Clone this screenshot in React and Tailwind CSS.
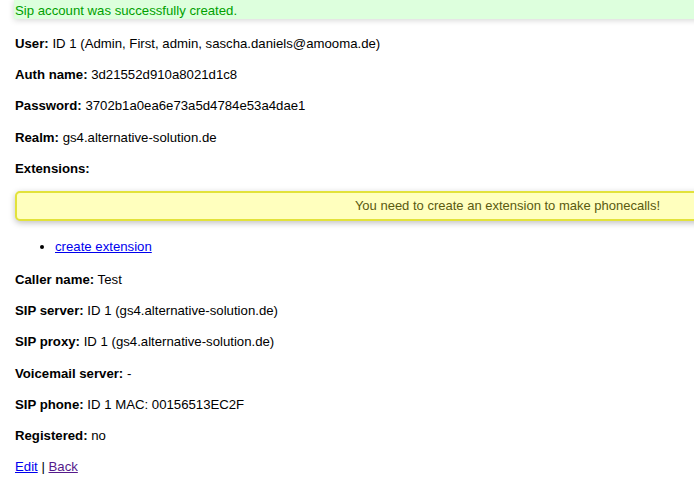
import React from "react";

const rows1 = [
  ["User:", "ID 1 (Admin, First, admin, sascha.daniels@amooma.de)"],
  ["Auth name:", "3d21552d910a8021d1c8"],
  ["Password:", "3702b1a0ea6e73a5d4784e53a4dae1"],
  ["Realm:", "gs4.alternative-solution.de"],
  ["Extensions:", ""],
];

const rows2 = [
  ["Caller name:", "Test"],
  ["SIP server:", "ID 1 (gs4.alternative-solution.de)"],
  ["SIP proxy:", "ID 1 (gs4.alternative-solution.de)"],
  ["Voicemail server:", "-"],
  ["SIP phone:", "ID 1 MAC: 00156513EC2F"],
  ["Registered:", "no"],
];

function Row({ label, value }) {
  return (
    <p className="mb-[13.2px] leading-[18px]">
      <b className="font-bold">{label}</b> {value}
    </p>
  );
}

export default function App() {
  return (
    <div
      className="relative h-[493px] w-[694px] overflow-hidden bg-white px-[15px] text-[13.2px] text-black"
      style={{ fontFamily: '"Liberation Sans", Arial, sans-serif' }}
    >
      {/* flash notice */}
      <div className="-ml-[1px] h-[19px] w-[900px] bg-[#ddffdd] pl-[1px] leading-[21px] text-[#00a000] shadow-[0_1px_6px_rgba(0,0,0,0.18)]">
        Sip account was successfully created.
      </div>

      <div className="mt-[16px]">
        {rows1.map(([l, v]) => (
          <Row key={l} label={l} value={v} />
        ))}
      </div>

      <div className="mt-[1px] h-[30px] w-[985px] rounded-[5px] border-2 border-[#e2e23a] bg-[#ffffbe] text-center text-[13px] leading-[26px] text-[#5a5a10] shadow-[0_2px_6px_rgba(0,0,0,0.25)]">
        You need to create an extension to make phonecalls!
      </div>

      <ul className="mb-[15px] mt-[17px] list-disc pl-[40px] leading-[18px]">
        <li>
          <a href="#" className="text-[#0000ee] underline">
            create extension
          </a>
        </li>
      </ul>

      {rows2.map(([l, v]) => (
        <Row key={l} label={l} value={v} />
      ))}

      <p className="mt-[1px] leading-[18px]">
        <a href="#" className="text-[#0000ee] underline">
          Edit
        </a>{" "}
        |{" "}
        <a href="#" className="text-[#551a8b] underline">
          Back
        </a>
      </p>
    </div>
  );
}
